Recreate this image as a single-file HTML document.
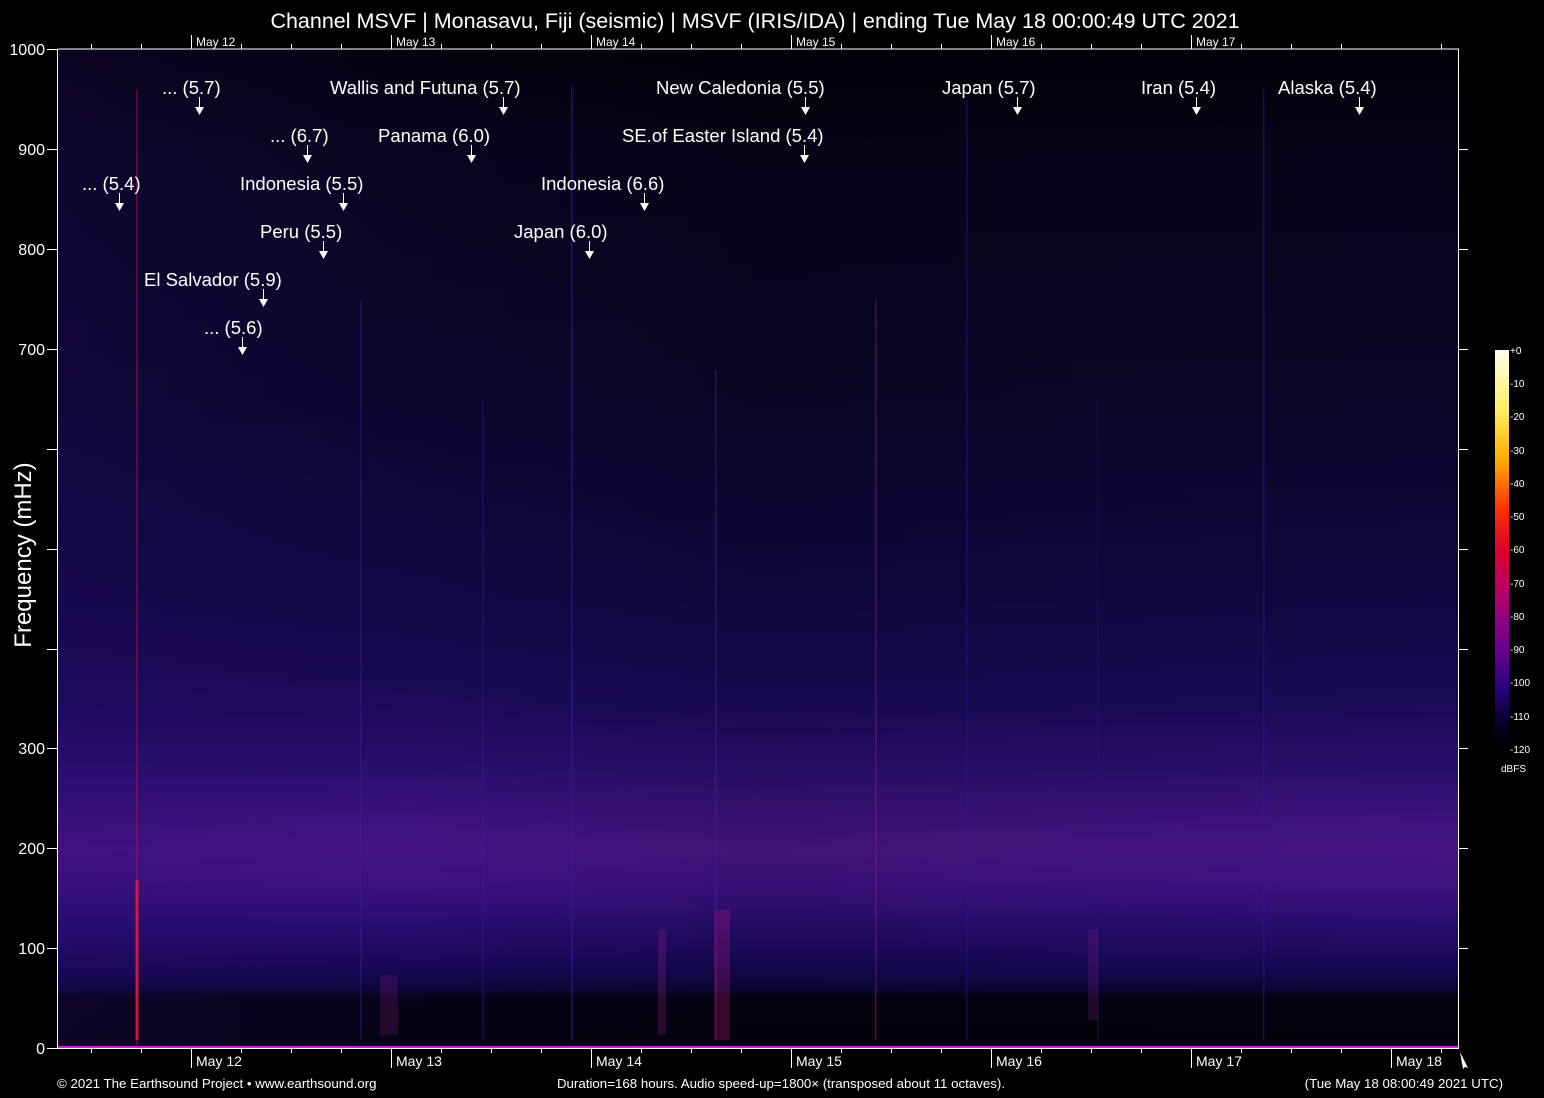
<!DOCTYPE html>
<html><head><meta charset="utf-8"><style>
html,body{margin:0;padding:0;background:#000;width:1544px;height:1098px;overflow:hidden}
svg{display:block}
text{font-family:"Liberation Sans",sans-serif;fill:#fff}
</style></head><body>
<svg width="1544" height="1098" viewBox="0 0 1544 1098" xmlns="http://www.w3.org/2000/svg">
<defs>
<linearGradient id="bg" x1="0" y1="49" x2="0" y2="1048" gradientUnits="userSpaceOnUse">
<stop offset="0" stop-color="#020108"/>
<stop offset="0.1" stop-color="#060418"/>
<stop offset="0.35" stop-color="#0a0628"/>
<stop offset="0.55" stop-color="#100840"/>
<stop offset="0.66" stop-color="#1a0a58"/>
<stop offset="0.72" stop-color="#2a0e6c"/>
<stop offset="0.77" stop-color="#3c137c"/>
<stop offset="0.8" stop-color="#461582"/>
<stop offset="0.84" stop-color="#3c1280"/>
<stop offset="0.88" stop-color="#260c6c"/>
<stop offset="0.92" stop-color="#160854"/>
<stop offset="0.94" stop-color="#0c0638"/>
<stop offset="0.95" stop-color="#040210"/>
<stop offset="0.995" stop-color="#03020c"/>
<stop offset="1" stop-color="#0a0630"/>
</linearGradient>
<linearGradient id="lf" x1="58" y1="0" x2="1458" y2="0" gradientUnits="userSpaceOnUse">
<stop offset="0" stop-color="#2a0a70" stop-opacity="0.25"/>
<stop offset="0.25" stop-color="#2a0a70" stop-opacity="0.08"/>
<stop offset="0.5" stop-color="#000" stop-opacity="0.1"/>
<stop offset="1" stop-color="#000" stop-opacity="0"/>
</linearGradient>
<linearGradient id="cb" x1="0" y1="350" x2="0" y2="748" gradientUnits="userSpaceOnUse">
<stop offset="0" stop-color="#fffff0"/>
<stop offset="0.15" stop-color="#ffee60"/>
<stop offset="0.27" stop-color="#ffb000"/>
<stop offset="0.4" stop-color="#ff3000"/>
<stop offset="0.5" stop-color="#e0002a"/>
<stop offset="0.62" stop-color="#b00070"/>
<stop offset="0.75" stop-color="#6a0090"/>
<stop offset="0.85" stop-color="#2a0080"/>
<stop offset="0.93" stop-color="#080030"/>
<stop offset="1" stop-color="#000"/>
</linearGradient>
</defs>
<text x="755" y="28" font-size="21.5" text-anchor="middle">Channel MSVF | Monasavu, Fiji (seismic) | MSVF (IRIS/IDA) | ending Tue May 18 00:00:49 UTC 2021</text>
<rect x="58" y="49" width="1400" height="999" fill="url(#bg)"/>
<rect x="58" y="49" width="1400" height="999" fill="url(#lf)"/>
<g>
<rect x="136" y="90" width="1.5" height="955" fill="#a01050" opacity="0.6"/>
<rect x="135.5" y="880" width="3" height="160" fill="#ff2030" opacity="0.7"/>
<rect x="571" y="85" width="1.5" height="955" fill="#3018c0" opacity="0.6"/>
<rect x="875" y="300" width="1.5" height="740" fill="#a01070" opacity="0.5"/>
<rect x="715" y="370" width="1.5" height="670" fill="#4020a0" opacity="0.5"/>
<rect x="714" y="910" width="16" height="130" fill="#c02080" opacity="0.25"/>
<rect x="1263" y="90" width="1.5" height="950" fill="#3018a0" opacity="0.5"/>
<rect x="966" y="100" width="1.5" height="940" fill="#2818a0" opacity="0.45"/>
<rect x="360" y="300" width="1.5" height="740" fill="#4020a0" opacity="0.4"/>
<rect x="482" y="400" width="1.5" height="640" fill="#4020a0" opacity="0.35"/>
<rect x="1097" y="400" width="1.5" height="640" fill="#3018a0" opacity="0.35"/>
<rect x="380" y="975" width="18" height="60" fill="#a02090" opacity="0.2"/>
<rect x="658" y="930" width="8" height="105" fill="#a02090" opacity="0.25"/>
<rect x="1088" y="930" width="10" height="90" fill="#a02090" opacity="0.2"/>
</g>
<rect x="58" y="1046" width="1400" height="2" fill="#d020d0"/>
<g stroke="#fff" stroke-width="1" fill="none">
<path d="M57.5 49V1048.5H1458.5V49H57.5"/>
<path d="M47 49.5h10M47 149.5h10M47 249.5h10M47 349.5h10M47 449.5h10M47 549.5h10M47 649.5h10M47 748.5h10M47 848.5h10M47 948.5h10M47 1048.5h10"/>
<path d="M1458 149.5h10M1458 249.5h10M1458 349.5h10M1458 449.5h10M1458 549.5h10M1458 649.5h10M1458 748.5h10M1458 848.5h10M1458 948.5h10"/>
<path d="M91.5 1048v5M141.5 1048v5M241.5 1048v5M291.5 1048v5M341.5 1048v5M441.5 1048v5M491.5 1048v5M541.5 1048v5M641.5 1048v5M691.5 1048v5M741.5 1048v5M841.5 1048v5M891.5 1048v5M941.5 1048v5M1041.5 1048v5M1091.5 1048v5M1141.5 1048v5M1241.5 1048v5M1291.5 1048v5M1341.5 1048v5M1441.5 1048v5"/>
<path d="M191.5 1048v20M391.5 1048v20M591.5 1048v20M791.5 1048v20M991.5 1048v20M1191.5 1048v20M1391.5 1048v20"/>
<path d="M91.5 49v-5M141.5 49v-5M241.5 49v-5M291.5 49v-5M341.5 49v-5M441.5 49v-5M491.5 49v-5M541.5 49v-5M641.5 49v-5M691.5 49v-5M741.5 49v-5M841.5 49v-5M891.5 49v-5M941.5 49v-5M1041.5 49v-5M1091.5 49v-5M1141.5 49v-5M1241.5 49v-5M1291.5 49v-5M1341.5 49v-5M1441.5 49v-5"/>
<path d="M191.5 49v-14M391.5 49v-14M591.5 49v-14M791.5 49v-14M991.5 49v-14M1191.5 49v-14"/>
</g>
<path d="M1460 1052l8 16l-3-1l-2 2z" fill="#fff"/>
<g font-size="16" text-anchor="end">
<text x="45" y="55">1000</text><text x="45" y="155">900</text><text x="45" y="255">800</text><text x="45" y="355">700</text>
<text x="45" y="754">300</text><text x="45" y="854">200</text><text x="45" y="954">100</text><text x="45" y="1054">0</text>
</g>
<text transform="translate(31,555) rotate(-90)" font-size="24" text-anchor="middle">Frequency (mHz)</text>
<g font-size="12">
<text x="196" y="46">May 12</text><text x="396" y="46">May 13</text><text x="596" y="46">May 14</text><text x="796" y="46">May 15</text><text x="996" y="46">May 16</text><text x="1196" y="46">May 17</text>
</g>
<g font-size="14">
<text x="196" y="1066">May 12</text><text x="396" y="1066">May 13</text><text x="596" y="1066">May 14</text><text x="796" y="1066">May 15</text><text x="996" y="1066">May 16</text><text x="1196" y="1066">May 17</text><text x="1396" y="1066">May 18</text>
</g>
<g font-size="13.3">
<text x="57" y="1088">© 2021 The Earthsound Project • www.earthsound.org</text>
<text x="781" y="1088" text-anchor="middle">Duration=168 hours. Audio speed-up=1800× (transposed about 11 octaves).</text>
<text x="1503" y="1088" text-anchor="end">(Tue May 18 08:00:49 2021 UTC)</text>
</g>
<rect x="1495" y="350" width="14" height="398" fill="url(#cb)"/>
<g font-size="10" fill="#ddd">
<text x="1510" y="354">+0</text><text x="1510" y="387">-10</text><text x="1510" y="420">-20</text><text x="1510" y="454">-30</text><text x="1510" y="487">-40</text><text x="1510" y="520">-50</text><text x="1510" y="553">-60</text><text x="1510" y="587">-70</text><text x="1510" y="620">-80</text><text x="1510" y="653">-90</text><text x="1510" y="686">-100</text><text x="1510" y="720">-110</text><text x="1510" y="753">-120</text>
<text x="1501" y="772">dBFS</text>
</g>
<g font-size="18.5">
<text x="162" y="94">... (5.7)</text>
<text x="330" y="94">Wallis and Futuna (5.7)</text>
<text x="656" y="94">New Caledonia (5.5)</text>
<text x="942" y="94">Japan (5.7)</text>
<text x="1141" y="94">Iran (5.4)</text>
<text x="1278" y="94">Alaska (5.4)</text>
<text x="270" y="142">... (6.7)</text>
<text x="378" y="142">Panama (6.0)</text>
<text x="622" y="142">SE.of Easter Island (5.4)</text>
<text x="82" y="190">... (5.4)</text>
<text x="240" y="190">Indonesia (5.5)</text>
<text x="541" y="190">Indonesia (6.6)</text>
<text x="260" y="238">Peru (5.5)</text>
<text x="514" y="238">Japan (6.0)</text>
<text x="144" y="286">El Salvador (5.9)</text>
<text x="204" y="334">... (5.6)</text>
</g>
<g stroke="#fff">
<path d="M199.5 97v10M503.5 97v10M805.5 97v10M1017.5 97v10M1196.5 97v10M1359.5 97v10M307.5 145v10M471.5 145v10M804.5 145v10M119.5 193v10M343.5 193v10M644.5 193v10M323.5 241v10M589.5 241v10M263.5 289v10M242.5 337v10" fill="none"/>
</g>
<g fill="#fff">
<path d="M195 107h9l-4.5 8z"/><path d="M499 107h9l-4.5 8z"/><path d="M801 107h9l-4.5 8z"/><path d="M1013 107h9l-4.5 8z"/><path d="M1192 107h9l-4.5 8z"/><path d="M1355 107h9l-4.5 8z"/>
<path d="M303 155h9l-4.5 8z"/><path d="M467 155h9l-4.5 8z"/><path d="M800 155h9l-4.5 8z"/>
<path d="M115 203h9l-4.5 8z"/><path d="M339 203h9l-4.5 8z"/><path d="M640 203h9l-4.5 8z"/>
<path d="M319 251h9l-4.5 8z"/><path d="M585 251h9l-4.5 8z"/>
<path d="M259 299h9l-4.5 8z"/><path d="M238 347h9l-4.5 8z"/>
</g>
</svg>
</body></html>
